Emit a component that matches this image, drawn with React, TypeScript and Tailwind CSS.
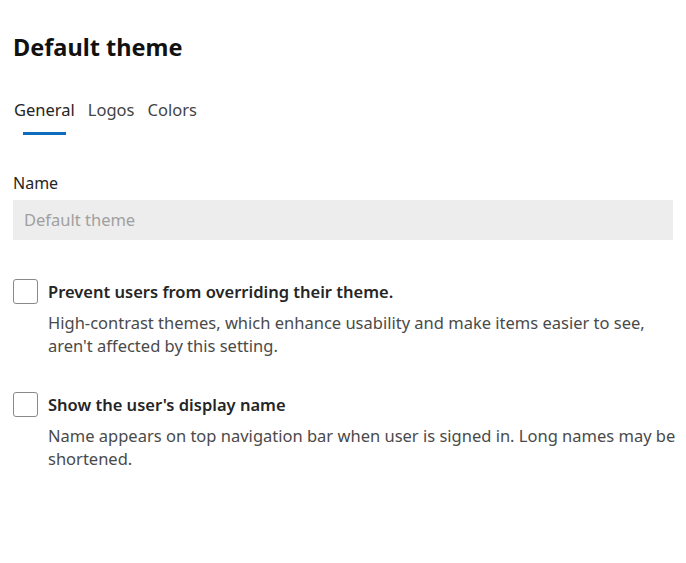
const Option = ({ title, desc }: { title: string; desc: string }) => (
  <div className="flex gap-[10px]">
    <div className="w-[25px] h-[25px] shrink-0 rounded-[3px] border border-[#8a8a8a] bg-white" />
    <div className="flex flex-col">
      <p className="text-[16.5px] leading-[25px] font-semibold text-[#252525]">{title}</p>
      <p className="mt-[7px] text-[16.5px] leading-[23px] text-[#4a4a4a]">{desc}</p>
    </div>
  </div>
)

const App = () => {
  return (
    <div
      className="w-[686px] h-[563px] bg-white pl-[13px] pt-[29px]"
      style={{ fontFamily: '"Segoe UI", "Noto Sans", sans-serif' }}
    >
      <h1 className="text-[23.5px] leading-[36px] font-bold text-[#111]">Default theme</h1>

      <div className="flex gap-[13px] mt-[34px] ml-[1px] text-[16.5px] leading-[22px]">
        <div className="flex flex-col items-center">
          <span className="text-[#252525]">General</span>
          <span className="mt-[11px] h-[3px] w-[43px] bg-[#0f6cbd]" />
        </div>
        <span className="text-[#444]">Logos</span>
        <span className="text-[#444]">Colors</span>
      </div>

      <p className="mt-[37px] text-[16px] leading-[22px] text-[#252525]">Name</p>
      <div className="mt-[6px] h-[40px] w-[660px] bg-[#ededed] flex items-center px-[11px] text-[16.5px] text-[#a0a0a0]">
        Default theme
      </div>

      <div className="mt-[39px] flex flex-col gap-[35px]">
        <Option
          title="Prevent users from overriding their theme."
          desc="High-contrast themes, which enhance usability and make items easier to see, aren't affected by this setting."
        />
        <Option
          title="Show the user's display name"
          desc="Name appears on top navigation bar when user is signed in. Long names may be shortened."
        />
      </div>
    </div>
  )
}

export default App
